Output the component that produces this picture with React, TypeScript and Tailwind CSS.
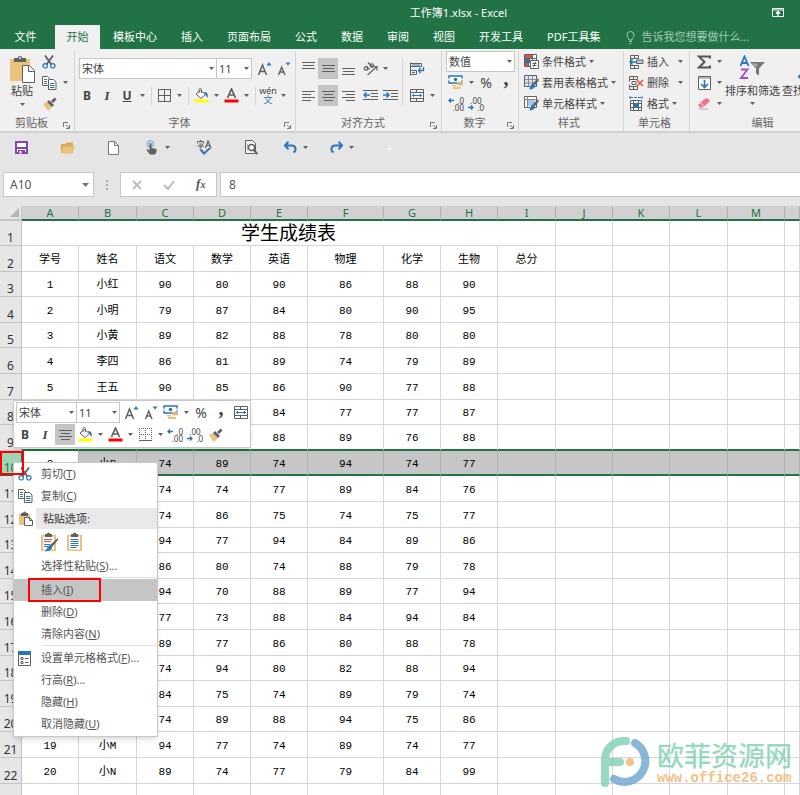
import type { ReactNode } from "react";

const BLUE = "#2e75b6";
const TAN = "#ebc27d";
const INK = "#606060";

type Row = { cells: (string | number)[] };

const rows: Row[] = [
    { cells: [1, "小红", 90, 80, 90, 86, 88, 90] },
    { cells: [2, "小明", 79, 87, 84, 80, 90, 95] },
    { cells: [3, "小黄", 89, 82, 88, 78, 80, 80] },
    { cells: [4, "李四", 86, 81, 89, 74, 79, 89] },
    { cells: [5, "王五", 90, 85, 86, 90, 77, 88] },
    { cells: ["", "", "", "", 84, 77, 77, 87] },
    { cells: ["", "", "", "", 88, 89, 76, 88] },
    { cells: [8, "小B", 74, 89, 74, 94, 74, 77] },
    { cells: ["", "", 74, 74, 77, 89, 84, 76] },
    { cells: ["", "", 74, 86, 75, 74, 75, 77] },
    { cells: ["", "", 94, 77, 94, 84, 89, 86] },
    { cells: ["", "", 86, 80, 74, 88, 79, 78] },
    { cells: ["", "", 94, 70, 88, 89, 77, 94] },
    { cells: ["", "", 77, 73, 88, 84, 94, 84] },
    { cells: ["", "", 89, 77, 86, 80, 88, 78] },
    { cells: ["", "", 74, 94, 80, 82, 88, 94] },
    { cells: ["", "", 84, 75, 74, 89, 79, 74] },
    { cells: ["", "", 74, 89, 88, 94, 75, 86] },
    { cells: [19, "小M", 94, 77, 74, 89, 74, 77] },
    { cells: [20, "小N", 89, 74, 77, 79, 84, 99] },
];

const subjects = ["学号", "姓名", "语文", "数学", "英语", "物理", "化学", "生物", "总分"];
const letters = ["A", "B", "C", "D", "E", "F", "G", "H", "I", "J", "K", "L", "M", ""];
const tabs = ["模板中心", "插入", "页面布局", "公式", "数据", "审阅", "视图", "开发工具", "PDF工具集"];

/* ---------- icons ---------- */

function Svg({ w, h, children }: { w: number; h: number; children: ReactNode }) {
    return (
        <svg width={w} height={h} viewBox={`0 0 ${w} ${h}`} fill="none" className="shrink-0" aria-hidden="true">
            {children}
        </svg>
    );
}

const Caret = () => (
    <span className="flex w-[10px] shrink-0 justify-center">
        <Svg w={5} h={3}><path d="M0 0h5L2.500 3z" fill={INK} /></Svg>
    </span>
);

const PasteBig = () => (
    <Svg w={26} h={28}>
        <path d="M1 4h20v22H1z" fill={TAN} />
        <path d="M5 3h3.500a2.600 2.600 0 0 1 5 0H17v4H5z" fill={INK} />
        <circle cx="11" cy="3" r="1" fill="#f0f0f0" />
        <path d="M13.500 10.500h7l5 5v12h-12z" fill="#fff" stroke={INK} />
        <path d="M19.500 11v5.500H25" stroke={INK} />
    </Svg>
);

const PasteSmall = () => (
    <Svg w={15} h={15}>
        <path d="M1 3h11v11H1z" fill={TAN} />
        <path d="M3 2h2a1.500 1.500 0 0 1 3 0h2v3H3z" fill={INK} />
        <path d="M6.500 6.500h5l3 3v5h-8z" fill="#fff" stroke={INK} />
        <path d="M11.500 6.500v3h3" stroke={INK} />
    </Svg>
);

const Cut = () => (
    <Svg w={14} h={14}>
        <path d="M3 0.500l6.500 9M11 0.500l-6.500 9" stroke={INK} strokeWidth="1.800" />
        <circle cx="3.200" cy="10.800" r="2.200" stroke={BLUE} strokeWidth="1.200" />
        <circle cx="10.800" cy="10.800" r="2.200" stroke={BLUE} strokeWidth="1.200" />
    </Svg>
);

const Copy = () => (
    <Svg w={15} h={14}>
        <path d="M0.500 0.500h5l2 2v7h-7z" fill="#fff" stroke={INK} />
        <path d="M2 3.500h3M2 5.500h3M2 7.500h3" stroke={BLUE} />
        <path d="M6.500 3.500h5l2.500 2.500v7.500H6.500z" fill="#fff" stroke={INK} />
        <path d="M8 7.500h4.500M8 9.500h4.500M8 11.500h4.500" stroke={BLUE} />
    </Svg>
);

const Brush = () => (
    <Svg w={15} h={14}>
        <path d="M1 7l4-2 5 5-4 4z" fill={TAN} />
        <path d="M5 5l2-2 5 5-2 2z" fill={INK} />
        <path d="M9 4l3.500-3.500 2 2L11 6z" fill={INK} />
    </Svg>
);

const Launcher = () => (
    <Svg w={7} h={7}>
        <path d="M0.500 5V0.500H5M3 3l3 3M6.500 3v3.500H3" stroke="#777" />
    </Svg>
);

const Grow = () => (
    <Svg w={15} h={15}>
        <path d="M1.500 14L5.500 4l4 10M3 10.500h5" stroke={INK} strokeWidth="1.500" />
        <path d="M9.500 4.500L12 1l2.500 3.500z" fill={BLUE} />
    </Svg>
);

const Shrink = () => (
    <Svg w={14} h={15}>
        <path d="M1.500 14l3.200-8L8 14M2.800 11h4" stroke={INK} strokeWidth="1.400" />
        <path d="M8.500 1.500h5L11 4.500z" fill={BLUE} />
    </Svg>
);

const Borders = ({ dashed = false }: { dashed?: boolean }) => (
    <Svg w={13} h={13}>
        <path d="M0.500 0v13M12.500 0v13M0 0.500h13M6.500 0v13M0 6.500h13" stroke={INK} strokeDasharray={dashed ? "1 1" : undefined} />
        <path d="M0 12.500h13" stroke={INK} />
    </Svg>
);

const Fill = () => (
    <Svg w={15} h={15}>
        <path d="M2 6l4.500-3.500 5 4L7 10.500z" fill="#fff" stroke={INK} />
        <path d="M5 5V1.500a1.300 1.300 0 0 1 2.500 0V5" stroke={INK} />
        <path d="M10 4c3 0 4.500 2 3.500 6-1-1-1-2-2-3z" fill={BLUE} />
        <path d="M0.500 11.500h14v3h-14z" fill="#ff0" />
    </Svg>
);

const FontColor = () => (
    <Svg w={15} h={15}>
        <path d="M3.500 10L7.500 1l4 9M5 7h5" stroke={INK} strokeWidth="1.700" />
        <path d="M0.500 11.500h14v3h-14z" fill="#f00" />
    </Svg>
);

/* alignment glyphs: each entry is [x, y, width] */
const alignLines: Record<string, number[][]> = {
    top: [[0, 0, 13], [1, 3, 11], [0, 6, 13]],
    middle: [[0, 3, 13], [1, 6, 11], [0, 9, 13]],
    bottom: [[0, 6, 13], [1, 9, 11], [0, 12, 13]],
    left: [[0, 2, 13], [0, 5, 9], [0, 8, 13], [0, 11, 9]],
    center: [[0, 2, 13], [2, 5, 9], [0, 8, 13], [2, 11, 9]],
    right: [[0, 2, 13], [4, 5, 9], [0, 8, 13], [4, 11, 9]],
};

const Align = ({ kind }: { kind: string }) => (
    <Svg w={13} h={14}>
        {alignLines[kind].map(([x, y, w]) => <path key={y} d={`M${x} ${y + 0.5}h${w}`} stroke={INK} />)}
    </Svg>
);

const Orient = () => (
    <Svg w={15} h={14}>
        <ellipse cx="3" cy="6.500" rx="1.800" ry="1.600" stroke={INK} strokeWidth="1.200" />
        <path d="M3 4l3.500 3.500M5 0.500l5 5" stroke={INK} strokeWidth="1.200" />
        <circle cx="8.800" cy="3.500" r="1.700" stroke={INK} strokeWidth="1.200" />
        <path d="M4.500 13l9-8M10 4.500h4v4" stroke={INK} strokeWidth="1.200" />
    </Svg>
);

const Indent = ({ flip = false }: { flip?: boolean }) => (
    <Svg w={15} h={13}>
        <path d="M0 1.500h15M8 4.500h7M8 7.500h7M0 10.500h15" stroke={INK} />
        <path d={flip ? "M0 6h6M3.500 3.500L6 6l-2.500 2.500" : "M1 6h6M3.500 3.500L1 6l2.500 2.500"} stroke={BLUE} strokeWidth="1.500" />
    </Svg>
);

const Wrap = () => (
    <Svg w={15} h={14}>
        <path d="M0.500 0.500v13M0.500 1.500h11v3H0.500M0.500 8.500h6v4H0.500" stroke={INK} />
        <path d="M2 3h8M2 10.500h3" stroke={BLUE} />
        <path d="M13.500 5v3.500H8.500M10.500 6l-2 2.500 2 2.500" stroke={BLUE} strokeWidth="1.300" />
    </Svg>
);

const Merge = () => (
    <Svg w={14} h={13}>
        <path d="M0.500 0.500h13v12H0.500zM0.500 3.500h13M0.500 9.500h13M6.500 0.500v3M6.500 9.500v3" stroke={INK} />
        <path d="M2 6.500h10M4 5L2.500 6.500 4 8M10 5l1.500 1.500L10 8" stroke={BLUE} />
    </Svg>
);

const Currency = () => (
    <Svg w={16} h={15}>
        <path d="M1 1h13v7H1z" fill="#fff" stroke={BLUE} strokeWidth="1.400" />
        <circle cx="7.500" cy="4.500" r="1.800" fill={BLUE} />
        <path d="M0 3.500h3v2H0zM12 3.500h3v2h-3z" fill="#f0f0f0" />
        <path d="M9 6.500h6v2H9zM9 9h6v1.500H9zM4 10h4v1.500H4zM5 12h8v2H5z" fill={TAN} />
    </Svg>
);

/* the decimal place buttons keep their digits as text */
const Decimals = ({ less = false }: { less?: boolean }) => {
    const arrow = (
        <Svg w={6} h={5}>
            <path d={less ? "M0 2.500h5M3 0.500l2 2-2 2" : "M1 2.500h5M3 0.500l-2 2 2 2"} stroke={BLUE} strokeWidth="1.300" />
        </Svg>
    );
    return (
        <span className="flex w-4 flex-col text-[8px] leading-[7px]">
            <span className={`flex items-center ${less ? "justify-center" : "justify-between"}`}>{less ? ".00" : <>{arrow}.0</>}</span>
            <span className={`flex items-center ${less ? "justify-between" : "justify-end"}`}>{less ? <>{arrow}.0</> : ".00"}</span>
        </span>
    );
};

const Conditional = () => (
    <Svg w={15} h={15}>
        <path d="M0.500 0.500h12v12H0.500zM4.500 0.500v12M8.500 0.500v12M0.500 4.500h12M0.500 8.500h12" fill="#fff" stroke={INK} />
        <path d="M1 1h7v3H1zM1 9h3v3H1z" fill="#e0533a" />
        <path d="M1 5h5v3H1z" fill={BLUE} />
        <path d="M6.500 6.500h8v8h-8z" fill="#fff" stroke={INK} />
        <path d="M8.500 9.500h4M8.500 11.500h4M11.500 8l-2 5" stroke={INK} />
    </Svg>
);

const TableStyle = ({ plain = false }: { plain?: boolean }) => (
    <Svg w={15} h={15}>
        <path d="M0.500 0.500h12v11H0.500z" fill={plain ? "#fff" : "#dbe7f3"} stroke={INK} />
        <path d={plain ? "M0.500 3.500h12M3.500 0.500v11" : "M0.500 4.500h12M0.500 8h12M4.500 0.500v11M8.500 0.500v11"} stroke="#8a8a8a" />
        {plain && <path d="M4 4h7v6H4z" fill="#a9c6e4" />}
        <path d="M14.500 3L9 8l2 2 3.500-4z" fill={INK} />
        <path d="M8.500 8.500c2 0 3 1 2.500 3s-3 3-6 3c1.500-1 1.500-5 3.500-6z" fill={BLUE} />
    </Svg>
);

const InsertCells = () => (
    <Svg w={15} h={14}>
        <path d="M1.500 0.500h8v3h-8zM5.500 0.500v3M1.500 10.500h8v3h-8zM5.500 10.500v3M1.500 3.500v7" stroke={INK} />
        <path d="M7.500 5h6.500v3.500H7.500z" fill="#b9cfe6" stroke={INK} />
        <path d="M1 7h6M3.500 4.500L1 7l2.500 2.500" stroke={BLUE} strokeWidth="1.500" />
    </Svg>
);

const DeleteCells = () => (
    <Svg w={15} h={14}>
        <path d="M0.500 0.500h8v3h-8zM4.500 0.500v3M0.500 10.500h8v3h-8zM4.500 10.500v3M0.500 3.500v2M0.500 8.500v2M3 5.500h4v3H3z" stroke={INK} />
        <path d="M8 4l6 6M14 4l-6 6" stroke="#dd5a3c" strokeWidth="1.600" />
    </Svg>
);

const FormatCells = () => (
    <Svg w={14} h={15}>
        <path d="M1 0v3M13 0v3M1 1.500h12" stroke={BLUE} strokeDasharray="3 1" />
        <path d="M1.500 4.500h11v10h-11zM1.500 7.500h11M1.500 11.500h11M4.500 4.500v10M9.500 4.500v10" fill="#fff" stroke={INK} />
        <path d="M5 7h5v5H5z" fill={BLUE} />
    </Svg>
);

const Sigma = () => (
    <Svg w={14} h={14}>
        <path d="M13 3.500V1.500H2L7.500 7 2 12.500h11v-2" stroke="#555" strokeWidth="2" />
    </Svg>
);

const FillDown = () => (
    <Svg w={13} h={14}>
        <path d="M0.500 0.500h12v13H0.500z" fill="#fff" stroke={INK} />
        <path d="M1 1h11v2H1z" fill="#b8b8b8" />
        <path d="M6.500 4v7.500M3 8l3.500 3.500L10 8" stroke={BLUE} strokeWidth="1.700" />
    </Svg>
);

const Eraser = () => (
    <Svg w={14} h={13}>
        <path d="M1 8l7-6.500h3L13 4 6 10.500H3z" fill="#e8788a" />
        <path d="M3.500 5.800L7.500 10" stroke="#fbd5da" />
        <path d="M2 12h9" stroke="#aaa" />
    </Svg>
);

const SortFilter = () => (
    <Svg w={27} h={25}>
        <path d="M1.500 11L5.500 1.500l4 9.500M3 8h5" stroke={BLUE} strokeWidth="1.800" />
        <path d="M2 14.500h6.500L2 23h7" stroke="#9b4fc0" strokeWidth="1.800" />
        <path d="M11 7h15l-6 6.500v7l-3-2v-5z" fill="#777" />
        <path d="M13 8.500h6l-2 4z" fill="#aaa" />
    </Svg>
);

const Search = () => (
    <Svg w={26} h={25}>
        <circle cx="16" cy="9" r="7" stroke={BLUE} strokeWidth="2" />
        <path d="M11 14l-9 9" stroke={BLUE} strokeWidth="4" />
    </Svg>
);

const Save = () => (
    <Svg w={13} h={13}>
        <path d="M1 1h11v11H1z" fill="#fff" stroke="#8745ac" strokeWidth="2" />
        <path d="M1 6h11v2H1zM3 9h7v4H3z" fill="#8745ac" />
        <path d="M4.500 10h2v2.500h-2z" fill="#fff" />
    </Svg>
);

const Folder = () => (
    <Svg w={15} h={12}>
        <path d="M1 11V2h4l1.500-1.500H13V5" fill="#dba95a" />
        <path d="M0.500 11.500L3.500 4.500h11.500l-2.500 7z" fill={TAN} />
    </Svg>
);

const Page = () => (
    <Svg w={11} h={14}>
        <path d="M0.500 0.500h6l4 4v9H0.500z" fill="#fff" stroke="#777" />
        <path d="M6.500 0.500v4h4" stroke="#777" />
    </Svg>
);

const Touch = () => (
    <Svg w={12} h={15}>
        <circle cx="4.500" cy="4" r="3" stroke="#8db6dd" strokeWidth="1.600" />
        <path d="M3.500 4a1 1 0 0 1 2 0v4l5 1v3l-1.500 2.500H4L0.500 10l1-1 2 1.500z" fill={INK} />
    </Svg>
);

const Spelling = () => (
    <Svg w={16} h={15}>
        <path d="M3.500 0v1.500M0.500 3.500v-2h6v2M2 4h3.500L4 5.500V8H2.500M0.500 6h6.500" stroke={INK} />
        <path d="M8.500 8l2.500-7 3 7M9.500 5.500h3.500" stroke={INK} strokeWidth="1.200" />
        <path d="M3.500 9.500l3.500 4 6-5.500" stroke={BLUE} strokeWidth="2" />
    </Svg>
);

const Preview = () => (
    <Svg w={13} h={15}>
        <path d="M0.500 0.500h7l3 3v10h-10z" fill="#f4f4f4" stroke={INK} />
        <path d="M2.500 4v6" stroke="#aaa" />
        <circle cx="6.500" cy="7.500" r="3" fill="#fff" stroke={INK} strokeWidth="1.300" />
        <path d="M8.500 10l4 4" stroke={INK} strokeWidth="1.800" />
    </Svg>
);

const Undo = ({ redo = false }: { redo?: boolean }) => (
    <Svg w={13} h={13}>
        <path
            d={redo ? "M12 4.500H5.500a3.600 3.600 0 0 0-2 6.800M8.500 0.800l3.700 3.700-3.700 3.700" : "M1 4.500h6.500a3.600 3.600 0 0 1 2 6.800M4.500 0.800L0.800 4.500l3.700 3.700"}
            stroke={BLUE}
            strokeWidth="2"
        />
    </Svg>
);

const PasteValues = ({ brush = false }: { brush?: boolean }) => (
    <Svg w={19} h={20}>
        <path d="M1 3h15v16H1z" fill={TAN} />
        <path d="M3 4.500h11v13H3z" fill="#fff" />
        <path d="M5 2h2a1.500 1.500 0 0 1 3 0h2v3H5z" fill={INK} />
        {brush ? (
            <>
                <path d="M4 7.500h8M4 9.500h7" stroke="#e0533a" />
                <path d="M4 12.500h6M4 14.500h4" stroke={BLUE} />
                <path d="M18 6l-8 7 2 2 6-7z" fill={INK} />
                <path d="M10 13c2 0 3 2 1.500 4S8 19 5 19.500c2-2 2-5 5-6.500z" fill={BLUE} />
            </>
        ) : (
            <path d="M4.500 7.500h8M4.500 9.500h8M4.500 11.500h8M4.500 13.500h8M4.500 15.500h6" stroke={BLUE} />
        )}
    </Svg>
);

const FormatDialog = () => (
    <Svg w={13} h={15}>
        <path d="M0.500 1.500h12v13H0.500z" fill="#fff" stroke={INK} />
        <path d="M0 0h13v4H0z" fill={BLUE} />
        <path d="M3 6.500h2v2H3zM3 10.500h2v2H3zM7 7.500h3.500M7 11.500h3.500" stroke={INK} />
    </Svg>
);

/* ---------- shared controls ---------- */

function Tool({ label, active, children }: { label: string; active?: boolean; children: ReactNode }) {
    return (
        <button
            type="button"
            aria-label={label}
            className={`flex h-[21px] w-5 shrink-0 items-center justify-center ${active ? "bg-[#c5c5c5]" : ""}`}
        >
            {children}
        </button>
    );
}

function Combo({ label, value, className }: { label: string; value: string; className: string }) {
    return (
        <div className={`flex h-[21px] shrink-0 items-center border border-[#c6c6c6] bg-white ${className}`}>
            <select aria-label={label} className="h-full w-full min-w-0 appearance-none bg-transparent pl-0.5 text-[11px] outline-none">
                <option>{value}</option>
            </select>
            <Caret />
        </div>
    );
}

const Comma = () => <b className="pb-2.5 font-['Liberation_Serif',serif] text-[20px] leading-3">,</b>;

const Divider = () => <div className="ml-1 mr-0.5 h-[18px] w-px shrink-0 bg-[#d4d4d4]" />;

function Group({ label, launcher, className, children }: { label: string; launcher?: boolean; className: string; children: ReactNode }) {
    return (
        <section className={`flex shrink-0 flex-col border-r border-[#d4d4d4] ${className}`}>
            <div className="h-16">{children}</div>
            <div className="flex h-4 items-center pr-1 text-[#666]">
                <span className="flex-1 text-center">{label}</span>
                {launcher && (
                    <button type="button" aria-label={`${label}设置`} className="pt-1"><Launcher /></button>
                )}
            </div>
        </section>
    );
}

function TextTool({ icon, label, className = "" }: { icon: ReactNode; label: string; className?: string }) {
    return (
        <button type="button" className={`flex h-[21px] items-center whitespace-nowrap ${className}`}>
            <span className="flex w-[18px] shrink-0">{icon}</span>
            <span className="flex-1 text-left">{label}</span>
            <Caret />
        </button>
    );
}

/* ---------- sections ---------- */

function TitleBar() {
    return (
        <header className="bg-[#217346] text-white">
            <div className="flex h-[25px] items-center pr-4">
                <div className="w-[145px]" />
                <h1 className="flex-1 text-center">工作簿1.xlsx - Excel</h1>
                <button type="button" aria-label="功能区显示选项">
                    <Svg w={12} h={9}>
                        <path d="M0.500 0.500h11v8H0.500zM0.500 2h11" stroke="#fff" />
                        <path d="M6 8V4M4 5.500L6 3.500l2 2" stroke="#fff" strokeWidth="1.300" />
                    </Svg>
                </button>
            </div>
            <nav className="flex h-6 items-stretch whitespace-nowrap">
                <button type="button" className="w-[55px] shrink-0 pr-1">文件</button>
                <button type="button" className="mr-px w-[45px] shrink-0 bg-[#f0f0f0] text-[#217346]">开始</button>
                {tabs.map((t) => (
                    <button key={t} type="button" className="shrink-0 px-3">{t}</button>
                ))}
                <button type="button" className="flex shrink-0 items-center gap-1.5 pl-3.5 text-[#a3c9b3]">
                    <Svg w={9} h={13}>
                        <path d="M3 9C3 7 1 6.500 1 4a3.500 3.500 0 0 1 7 0c0 2.500-2 3-2 5zM3 10.500h3M3.500 12.500h2" stroke="#a3c9b3" />
                    </Svg>
                    告诉我您想要做什么...
                </button>
            </nav>
        </header>
    );
}

function Ribbon() {
    return (
        <div className="flex h-[84px] overflow-hidden border-b-2 border-[#d2d2d2] bg-[#f0f0f0] pt-0.5 text-[#444]">
            <Group label="剪贴板" launcher className="w-[75px]">
                <div className="flex gap-[3px] pl-2">
                    <button type="button" className="flex w-7 flex-col items-center pt-1">
                        <PasteBig />
                        <span className="leading-4">粘贴</span>
                        <span className="pt-1"><Caret /></span>
                    </button>
                    <div className="flex flex-col">
                        <Tool label="剪切"><Cut /></Tool>
                        <div className="flex items-center gap-px"><Tool label="复制"><Copy /></Tool><Caret /></div>
                        <Tool label="格式刷"><Brush /></Tool>
                    </div>
                </div>
            </Group>

            <Group label="字体" launcher className="w-[221px]">
                <div className="flex pl-1 pt-[7px]">
                    <Combo label="字体" value="宋体" className="w-[138px]" />
                    <Combo label="字号" value="11" className="-ml-px w-[36px]" />
                    <div className="flex pl-0.5"><Tool label="增大字号"><Grow /></Tool><Tool label="减小字号"><Shrink /></Tool></div>
                </div>
                <div className="flex items-center pl-0.5 pt-1.5">
                    <Tool label="加粗"><b className="text-[12px]">B</b></Tool>
                    <Tool label="倾斜"><i className="font-['Liberation_Serif',serif] text-[13px] font-bold">I</i></Tool>
                    <Tool label="下划线"><b className="text-[12px] underline">U</b></Tool>
                    <Caret />
                    <Divider />
                    <Tool label="边框"><Borders /></Tool>
                    <Caret />
                    <Divider />
                    <Tool label="填充颜色"><Fill /></Tool>
                    <Caret />
                    <Tool label="字体颜色"><FontColor /></Tool>
                    <Caret />
                    <Divider />
                    <Tool label="拼音">
                        <span className="flex flex-col items-center text-[9px]">
                            <span className="leading-[7px]">wén</span>
                            <span className="leading-[11px] text-[#2e75b6]">文</span>
                        </span>
                    </Tool>
                    <Caret />
                </div>
            </Group>

            <Group label="对齐方式" launcher className="w-[146px]">
                <div className="flex pl-0.5 pt-[7px]">
                    <div className="flex w-[104px] flex-col gap-1.5">
                        <div className="flex">
                            <Tool label="顶端对齐"><Align kind="top" /></Tool>
                            <Tool label="垂直居中" active><Align kind="middle" /></Tool>
                            <Tool label="底端对齐"><Align kind="bottom" /></Tool>
                            <div className="flex items-center pl-0.5"><Tool label="方向"><Orient /></Tool><Caret /></div>
                        </div>
                        <div className="flex">
                            <Tool label="左对齐"><Align kind="left" /></Tool>
                            <Tool label="居中" active><Align kind="center" /></Tool>
                            <Tool label="右对齐"><Align kind="right" /></Tool>
                            <div className="flex pl-0.5"><Tool label="减少缩进量"><Indent /></Tool><Tool label="增加缩进量"><Indent flip /></Tool></div>
                        </div>
                    </div>
                    <div className="w-px bg-[#d4d4d4]" />
                    <div className="flex flex-col gap-1.5 pl-1">
                        <Tool label="自动换行"><Wrap /></Tool>
                        <div className="flex items-center"><Tool label="合并后居中"><Merge /></Tool><Caret /></div>
                    </div>
                </div>
            </Group>

            <Group label="数字" launcher className="w-[77px]">
                <div className="flex flex-col pl-1">
                    <Combo label="数字格式" value="数值" className="w-[69px]" />
                    <div className="flex items-center">
                        <Tool label="会计数字格式"><Currency /></Tool>
                        <Caret />
                        <Tool label="百分比样式"><span className="text-sm leading-none">%</span></Tool>
                        <Tool label="千位分隔样式"><Comma /></Tool>
                    </div>
                    <div className="flex">
                        <Tool label="增加小数位数"><Decimals /></Tool>
                        <Tool label="减少小数位数"><Decimals less /></Tool>
                    </div>
                </div>
            </Group>

            <Group label="样式" className="w-[105px]">
                <div className="flex flex-col items-start pl-[5px]">
                    <TextTool icon={<Conditional />} label="条件格式" />
                    <TextTool icon={<TableStyle />} label="套用表格格式" />
                    <TextTool icon={<TableStyle plain />} label="单元格样式" />
                </div>
            </Group>

            <Group label="单元格" className="w-[66px]">
                <div className="flex flex-col items-start pl-[5px]">
                    <TextTool icon={<InsertCells />} label="插入" className="w-[56px]" />
                    <TextTool icon={<DeleteCells />} label="删除" className="w-[56px]" />
                    <TextTool icon={<FormatCells />} label="格式" />
                </div>
            </Group>

            <Group label="编辑" className="w-[150px]">
                <div className="flex">
                    <div className="flex flex-col pl-1">
                        <div className="flex items-center"><Tool label="自动求和"><Sigma /></Tool><Caret /></div>
                        <div className="flex items-center"><Tool label="填充"><FillDown /></Tool><Caret /></div>
                        <div className="flex items-center"><Tool label="清除"><Eraser /></Tool><Caret /></div>
                    </div>
                    <button type="button" className="flex w-[57px] flex-col items-center whitespace-nowrap pt-1">
                        <SortFilter />
                        <span className="pt-0.5 leading-[18px]">排序和筛选</span>
                        <span className="pt-0.5"><Caret /></span>
                    </button>
                    <button type="button" className="flex w-[57px] flex-col items-center whitespace-nowrap pt-1">
                        <Search />
                        <span className="pt-0.5 leading-[18px]">查找和选择</span>
                    </button>
                </div>
            </Group>
        </div>
    );
}

function QuickAccess() {
    const items = [
        { label: "保存", icon: <Save /> },
        { label: "打开", icon: <Folder /> },
        { label: "新建", icon: <Page /> },
        { label: "触摸模式", icon: <Touch />, menu: true },
        { label: "拼写检查", icon: <Spelling /> },
        { label: "打印预览", icon: <Preview /> },
        { label: "撤消", icon: <Undo />, menu: true },
        { label: "恢复", icon: <Undo redo />, menu: true },
        { label: "自定义快速访问工具栏", icon: <Svg w={5} h={6}><path d="M0 0.500h5M0 3h5L2.500 6z" fill="#f6f6f6" stroke="#f6f6f6" strokeWidth="0.500" /></Svg> },
    ];
    return (
        <div className="flex h-[39px] items-start pt-1">
            {items.map((it) => (
                <button key={it.label} type="button" aria-label={it.label} className="flex h-[21px] w-[46px] items-center justify-center gap-1 pr-1">
                    {it.icon}
                    {it.menu && <Caret />}
                </button>
            ))}
        </div>
    );
}

function FormulaBar() {
    return (
        <div className="mb-[9px] flex h-[25px] pl-[3px] text-[12px] text-[#555]">
            <div className="flex w-[91px] items-center border border-[#c6c6c6] bg-white pr-1">
                <input aria-label="名称框" defaultValue="A10" className="w-full min-w-0 bg-transparent pl-1.5 outline-none" />
                <Svg w={7} h={4}><path d="M0 0h7L3.500 4z" fill="#777" /></Svg>
            </div>
            <div className="flex w-[26px] items-center justify-center">
                <Svg w={2} h={10}><path d="M0 0h2v2H0zM0 4h2v2H0zM0 8h2v2H0z" fill="#aaa" /></Svg>
            </div>
            <div className="flex w-[97px] items-center justify-around border border-[#c6c6c6] bg-white">
                <button type="button" aria-label="取消"><Svg w={10} h={10}><path d="M1 1l8 8M9 1L1 9" stroke="#bbb" strokeWidth="1.800" /></Svg></button>
                <button type="button" aria-label="输入"><Svg w={12} h={10}><path d="M1 5l4 4 6-8" stroke="#bbb" strokeWidth="2" /></Svg></button>
                <button type="button" aria-label="插入函数" className="font-['Liberation_Serif',serif] text-[13px] font-bold italic">
                    f<span className="text-[10px]">x</span>
                </button>
            </div>
            <input aria-label="编辑栏" defaultValue="8" className="ml-[3px] min-w-0 flex-1 border border-r-0 border-[#c6c6c6] bg-white pl-2 outline-none" />
        </div>
    );
}

const cell = "border-b border-r border-[#d6d6d6] p-0 pt-0.5";
const rowHead = "border-b border-r border-[#c4c4c4] bg-[#e6e6e6] p-0 align-bottom text-[12px] leading-[14px] font-normal text-[#333]";

function ScoreRow({ row, index }: { row: Row; index: number }) {
    const n = index + 3;
    const selected = n === 10;
    // the selection outline is the bottom edge of the row above plus its own
    let td = cell;
    if (n === 9) td = "border-b-2 border-r border-r-[#d6d6d6] border-b-[#217346] p-0 pt-0.5";
    if (selected) td = "border-b-2 border-r border-r-[#b2b2b2] border-b-[#217346] p-0 pt-0.5";

    return (
        <tr className={index % 5 === 0 || index % 5 === 2 ? "h-[25px]" : "h-[26px]"}>
            <th scope="row" className={selected ? "border-b border-r border-[#217346] bg-[#9fd5b7] p-0 align-bottom text-[12px] font-normal leading-[14px] text-[#217346]" : rowHead}>
                {n}
            </th>
            {letters.map((_, i) => (
                <td key={i} className={`${td} ${selected && i > 0 ? "bg-[#c6c6c6]" : ""}`}>{row.cells[i]}</td>
            ))}
        </tr>
    );
}

function Grid() {
    return (
        <table className="w-full table-fixed border-separate border-spacing-0 bg-white text-center font-['Liberation_Mono','Noto_Sans_CJK_SC',monospace] text-[11px] leading-4 text-black">
            <colgroup>
                <col className="w-[22px]" />
                <col className="w-[57px]" />
                <col className="w-[58px]" />
                <col className="w-[57px]" />
                <col className="w-[57px]" />
                <col className="w-[57px]" />
                <col className="w-[76px]" />
                <col className="w-[57px]" />
                <col className="w-[57px]" />
                <col className="w-[58px]" />
                <col className="w-[57px]" />
                <col className="w-[57px]" />
                <col className="w-[58px]" />
                <col className="w-[57px]" />
                <col />
            </colgroup>
            <thead className="font-['Noto_Sans',sans-serif] leading-[13px]">
                <tr className="h-[15px]">
                    <th className="border-b-2 border-r border-[#c4c4c4] bg-[#e6e6e6] p-0">
                        <span className="flex justify-end pr-0.5"><Svg w={9} h={9}><path d="M9 0v9H0z" fill="#b5b5b5" /></Svg></span>
                    </th>
                    {letters.map((l, i) => (
                        <th key={i} scope="col" className="border-b-2 border-r border-b-[#217346] border-r-[#b0b0b0] bg-[#d1d1d1] p-0 font-normal text-[#217346]">{l}</th>
                    ))}
                </tr>
            </thead>
            <tbody className="[&_th]:font-['Noto_Sans',sans-serif]">
                <tr className="h-[25px]">
                    <th scope="row" className={rowHead}>1</th>
                    <td colSpan={9} className="border-b border-r border-[#d6d6d6] p-0 pt-1 text-[19px] leading-5">学生成绩表</td>
                    {letters.slice(9).map((_, i) => <td key={i} className={cell} />)}
                </tr>
                <tr className="h-[26px]">
                    <th scope="row" className={rowHead}>2</th>
                    {letters.map((_, i) => <td key={i} className={cell}>{subjects[i]}</td>)}
                </tr>
                {rows.map((r, i) => <ScoreRow key={i} row={r} index={i} />)}
                <tr className="h-[26px]">
                    <th className={rowHead} />
                    {letters.map((_, i) => <td key={i} className={cell} />)}
                </tr>
            </tbody>
        </table>
    );
}

function MiniToolbar() {
    return (
        <div className="absolute left-[13px] top-[194px] w-[238px] border border-[#c8c8c8] bg-white pb-0.5 pt-px text-[#444] shadow-md">
            <div className="flex items-center pl-0.5">
                <Combo label="字体" value="宋体" className="w-[61px]" />
                <Combo label="字号" value="11" className="-ml-px mr-px w-[44px]" />
                <Tool label="增大字号"><Grow /></Tool>
                <Tool label="减小字号"><Shrink /></Tool>
                <Tool label="会计数字格式"><Currency /></Tool>
                <Caret />
                <Tool label="百分比样式"><span className="text-sm leading-none">%</span></Tool>
                <Tool label="千位分隔样式"><Comma /></Tool>
                <Tool label="合并后居中"><Merge /></Tool>
            </div>
            <div className="flex items-center pl-px pt-px">
                <Tool label="加粗"><b className="text-[12px]">B</b></Tool>
                <Tool label="倾斜"><i className="font-['Liberation_Serif',serif] text-[13px] font-bold">I</i></Tool>
                <Tool label="居中" active><Align kind="center" /></Tool>
                <Tool label="填充颜色"><Fill /></Tool>
                <Caret />
                <Tool label="字体颜色"><FontColor /></Tool>
                <Caret />
                <Tool label="边框"><Borders dashed /></Tool>
                <Caret />
                <Tool label="增加小数位数"><Decimals /></Tool>
                <Tool label="减少小数位数"><Decimals less /></Tool>
                <Tool label="格式刷"><Brush /></Tool>
            </div>
        </div>
    );
}

function MenuItem({ label, hotkey, more, icon, active }: { label: string; hotkey: string; more?: boolean; icon?: ReactNode; active?: boolean }) {
    return (
        <button type="button" role="menuitem" className={`flex h-[22px] w-full items-center whitespace-nowrap text-left ${active ? "bg-[#c5c5c5]" : ""}`}>
            <span className="flex w-[27px] shrink-0 pl-1">{icon}</span>
            <span>{label}(<u>{hotkey}</u>){more && "..."}</span>
        </button>
    );
}

const MenuLine = () => <div className="ml-7 h-0.5 border-t border-[#e0e0e0]" />;

function ContextMenu() {
    return (
        <div role="menu" className="absolute left-[13px] top-[256px] w-[145px] border border-[#c8c8c8] bg-white pb-px text-[#555] shadow-md">
            <MenuItem label="剪切" hotkey="T" icon={<Cut />} />
            <MenuItem label="复制" hotkey="C" icon={<Copy />} />
            <div className="flex h-[22px] items-center">
                <span className="flex w-[22px] shrink-0 pl-1"><PasteSmall /></span>
                <span className="flex-1 bg-[#e9e9e9] pl-[7px] font-medium leading-[21px]">粘贴选项:</span>
            </div>
            <div className="flex h-[26px] items-center gap-[7px] pl-[26px]">
                <button type="button" aria-label="粘贴"><PasteValues brush /></button>
                <button type="button" aria-label="粘贴值"><PasteValues /></button>
            </div>
            <MenuItem label="选择性粘贴" hotkey="S" more />
            <MenuLine />
            <MenuItem label="插入" hotkey="I" active />
            <MenuItem label="删除" hotkey="D" />
            <MenuItem label="清除内容" hotkey="N" />
            <MenuLine />
            <MenuItem label="设置单元格格式" hotkey="F" more icon={<FormatDialog />} />
            <MenuItem label="行高" hotkey="R" more />
            <MenuItem label="隐藏" hotkey="H" />
            <MenuItem label="取消隐藏" hotkey="U" />
        </div>
    );
}

function Watermark() {
    return (
        <div className="absolute bottom-2 right-2 flex items-center gap-1.5 opacity-80">
            <Svg w={50} h={50}>
                <path d="M4 46V23A19 19 0 0 1 25 4M4 25h15" stroke="#7fd1b0" strokeWidth="8" strokeLinecap="round" />
                <path d="M34 6a19.500 19.500 0 1 1-21 36" stroke="#6ba6d2" strokeWidth="8" strokeLinecap="round" />
                <circle cx="29" cy="25" r="4" fill="#f0b36b" />
            </Svg>
            <div className="flex flex-col pt-0.5">
                <span className="text-[27px] font-medium leading-[30px] text-[#7fd1b0]">欧菲资源网</span>
                <span className="font-['Liberation_Mono',monospace] text-[14px] font-bold leading-[14px] text-[#f0b36b]">www.office26.com</span>
            </div>
        </div>
    );
}

export default function App() {
    return (
        <main className="flex h-screen flex-col overflow-hidden bg-[#e5e5e5] font-['Noto_Sans','Noto_Sans_CJK_SC',sans-serif] text-[11px] leading-4">
            <TitleBar />
            <Ribbon />
            <QuickAccess />
            <FormulaBar />
            <div className="relative min-h-0 flex-1 overflow-hidden">
                <Grid />
                <MiniToolbar />
                <ContextMenu />
                {/* call-outs for the row header and the insert command */}
                <div className="pointer-events-none absolute left-0 top-[245px] h-6 w-6 border-2 border-[#f00]" />
                <div className="pointer-events-none absolute left-[28px] top-[372px] h-6 w-[73px] border-2 border-[#f00]" />
                <Watermark />
            </div>
        </main>
    );
}
